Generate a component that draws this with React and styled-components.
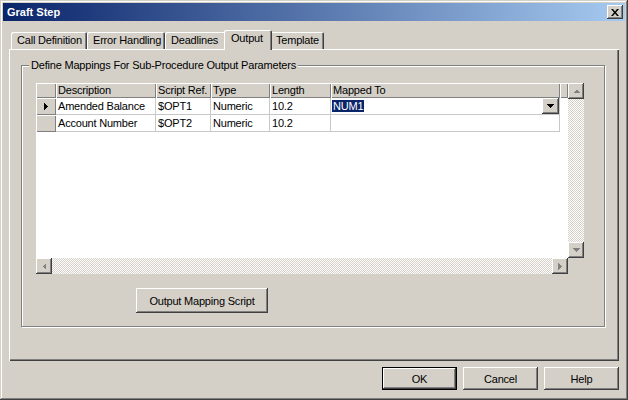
import React from "react";
import styled, { createGlobalStyle, css } from "styled-components";

const GlobalStyle = createGlobalStyle`
  html, body {
    margin: 0;
    padding: 0;
    background: #d4d0c8;
  }
  body {
    font-family: "Liberation Sans", Arial, sans-serif;
    font-size: 11px;
    letter-spacing: -0.2px;
    color: #000;
  }
`;

// classic 3d edges
const raised = css`
  box-shadow: inset -1px -1px #404040, inset 1px 1px #fff,
    inset -2px -2px #808080, inset 2px 2px #d4d0c8;
`;

const Window = styled.div`
  width: 628px;
  height: 400px;
  box-sizing: border-box;
  padding: 3px;
  background: #d4d0c8;
  display: flex;
  flex-direction: column;
  box-shadow: inset -1px -1px #404040, inset 1px 1px #d4d0c8,
    inset -2px -2px #808080, inset 2px 2px #fff;
`;

const TitleBar = styled.div`
  height: 18px;
  display: flex;
  align-items: center;
  justify-content: space-between;
  padding: 0 2px 0 2px;
  background: linear-gradient(to right, #0a246a, #a6caf0);
  color: #fff;
  font-weight: bold;
  font-size: 11px;
  letter-spacing: 0;
`;

const CloseButton = styled.div`
  width: 16px;
  height: 14px;
  background: #d4d0c8;
  display: flex;
  align-items: center;
  justify-content: center;
  ${raised};
`;

const Body = styled.div`
  flex: 1;
  display: flex;
  flex-direction: column;
  padding: 0 6px;
`;

const TabRow = styled.div`
  display: flex;
  align-items: flex-end;
  height: 19px;
  margin-top: 9px;
  padding-left: 2px;
  position: relative;
  z-index: 1;
`;

const Tab = styled.div`
  box-sizing: border-box;
  width: ${(p) => p.w}px;
  height: ${(p) => (p.active ? 20 : 17)}px;
  margin: 0 ${(p) => (p.active ? -2 : 0)}px ${(p) => (p.active ? -1 : 0)}px;
  padding-left: ${(p) => (p.active ? 7 : 6)}px;
  line-height: 17px;
  background: #d4d0c8;
  border-radius: 2px 2px 0 0;
  white-space: nowrap;
  position: relative;
  z-index: ${(p) => (p.active ? 2 : 1)};
  box-shadow: inset 1px 1px #fff, inset -1px 0 #404040, inset -2px 0 #808080;
`;

const Panel = styled.div`
  height: 312px;
  box-sizing: border-box;
  padding: 16px 14px 0 12px;
  box-shadow: inset 1px 1px #fff, inset -1px -1px #404040,
    inset -2px -2px #808080;
`;

const GroupBox = styled.div`
  position: relative;
  height: 262px;
  box-sizing: border-box;
  padding: 17px 19px 0 14px;
  border: 1px solid #808080;
  box-shadow: inset 1px 1px #fff, 1px 1px #fff;
`;

const GroupLabel = styled.span`
  position: absolute;
  top: -7px;
  left: 7px;
  padding: 0 2px;
  background: #d4d0c8;
  line-height: 13px;
`;

const GridFrame = styled.div`
  display: grid;
  grid-template-columns: 532px 16px;
  grid-template-rows: 175px 16px;
`;

const DataArea = styled.div`
  background: #fff;
  overflow: hidden;
`;

const HeaderRow = styled.div`
  display: grid;
  grid-template-columns: 20px 100px 55px 59px 61px 229px 8px;
  height: 15px;
`;

const HeaderCell = styled.div`
  background: #d4d0c8;
  padding-left: 2px;
  line-height: 15px;
  white-space: nowrap;
  overflow: hidden;
  box-shadow: inset 1px 1px #fff, inset -1px -1px #808080;
`;

const Row = styled.div`
  display: grid;
  grid-template-columns: 20px 100px 55px 59px 61px 229px;
  height: 17px;
`;

const Cell = styled.div`
  display: flex;
  align-items: center;
  justify-content: space-between;
  padding-left: 2px;
  border-right: 1px solid #c8c8c8;
  border-bottom: 1px solid #c8c8c8;
  white-space: nowrap;
  overflow: hidden;
`;

const Indicator = styled.div`
  display: flex;
  align-items: center;
  justify-content: center;
  background: #d4d0c8;
  box-shadow: inset 1px 1px #fff, inset -1px -1px #808080;
`;

const Selected = styled.span`
  background: #0a246a;
  color: #fff;
  padding: 0 1px;
  line-height: 12px;
  margin-left: -1px;
`;

const DropButton = styled.div`
  width: 17px;
  height: 16px;
  background: #d4d0c8;
  display: flex;
  align-items: center;
  justify-content: center;
  ${raised};
`;

const ScrollTrack = styled.div`
  display: flex;
  flex-direction: ${(p) => (p.vertical ? "column" : "row")};
  justify-content: space-between;
  background: repeating-conic-gradient(#d4d0c8 0 25%, #fff 0 50%) 0 0 / 2px
    2px;
`;

const ScrollButton = styled.div`
  width: 16px;
  height: 16px;
  background: #d4d0c8;
  display: flex;
  align-items: center;
  justify-content: center;
  ${raised};
`;

const Corner = styled.div`
  background: #d4d0c8;
`;

const Button = styled.div`
  box-sizing: border-box;
  width: ${(p) => p.w}px;
  height: ${(p) => p.h}px;
  display: flex;
  align-items: center;
  justify-content: center;
  background: #d4d0c8;
  ${(p) =>
    p.isDefault
      ? css`
          box-shadow: inset 0 0 0 1px #000, inset -2px -2px #404040,
            inset 2px 2px #fff, inset -3px -3px #808080;
        `
      : raised};
`;

const ScriptButtonRow = styled.div`
  margin: 14px 0 0 100px;
`;

const Footer = styled.div`
  display: flex;
  justify-content: flex-end;
  gap: 6px;
  margin-top: 6px;
`;

const Arrow = ({ dir, color = "#808080" }) => {
  const paths = {
    up: "M0 4 L3.5 0.5 L7 4 Z",
    down: "M0 0 L7 0 L3.5 4 Z",
    left: "M4 0 L4 7 L0.5 3.5 Z",
    right: "M0 0 L3.5 3.5 L0 7 Z",
  };
  const vertical = dir === "up" || dir === "down";
  return (
    <svg
      width={vertical ? 7 : 4}
      height={vertical ? 4 : 7}
      viewBox={vertical ? "0 0 7 4" : "0 0 4 7"}
    >
      <path d={paths[dir]} fill={color} shapeRendering="crispEdges" />
    </svg>
  );
};

const rows = [
  { desc: "Amended Balance", ref: "$OPT1", type: "Numeric", len: "10.2", current: true },
  { desc: "Account Number", ref: "$OPT2", type: "Numeric", len: "10.2" },
];

const tabs = [
  { label: "Call Definition", w: 76 },
  { label: "Error Handling", w: 78 },
  { label: "Deadlines", w: 61 },
  { label: "Output", w: 48, active: true },
  { label: "Template", w: 54 },
];

export default function App() {
  return (
    <>
      <GlobalStyle />
      <Window>
        <TitleBar>
          <span style={{ paddingLeft: 2 }}>Graft Step</span>
          <CloseButton>
            <svg width="8" height="7" viewBox="0 0 8 7">
              <path
                d="M0 0h2l2 2.4L6 0h2L5 3.5 8 7H6L4 4.6 2 7H0l3-3.5z"
                fill="#000"
              />
            </svg>
          </CloseButton>
        </TitleBar>
        <Body>
          <TabRow>
            {tabs.map((t) => (
              <Tab key={t.label} w={t.w} active={t.active}>
                {t.label}
              </Tab>
            ))}
          </TabRow>
          <Panel>
            <GroupBox>
              <GroupLabel>
                Define Mappings For Sub-Procedure Output Parameters
              </GroupLabel>
              <GridFrame>
                <DataArea>
                  <HeaderRow>
                    <HeaderCell />
                    <HeaderCell>Description</HeaderCell>
                    <HeaderCell>Script Ref.</HeaderCell>
                    <HeaderCell>Type</HeaderCell>
                    <HeaderCell>Length</HeaderCell>
                    <HeaderCell>Mapped To</HeaderCell>
                    <HeaderCell />
                  </HeaderRow>
                  {rows.map((r) => (
                    <Row key={r.ref}>
                      <Indicator>
                        {r.current && <Arrow dir="right" color="#000" />}
                      </Indicator>
                      <Cell>{r.desc}</Cell>
                      <Cell>{r.ref}</Cell>
                      <Cell>{r.type}</Cell>
                      <Cell>{r.len}</Cell>
                      <Cell>
                        {r.current && (
                          <>
                            <Selected>NUM1</Selected>
                            <DropButton>
                              <Arrow dir="down" color="#000" />
                            </DropButton>
                          </>
                        )}
                      </Cell>
                    </Row>
                  ))}
                </DataArea>
                <ScrollTrack vertical>
                  <ScrollButton>
                    <Arrow dir="up" />
                  </ScrollButton>
                  <ScrollButton>
                    <Arrow dir="down" />
                  </ScrollButton>
                </ScrollTrack>
                <ScrollTrack>
                  <ScrollButton>
                    <Arrow dir="left" />
                  </ScrollButton>
                  <ScrollButton>
                    <Arrow dir="right" />
                  </ScrollButton>
                </ScrollTrack>
                <Corner />
              </GridFrame>
              <ScriptButtonRow>
                <Button w={132} h={25}>
                  Output Mapping Script
                </Button>
              </ScriptButtonRow>
            </GroupBox>
          </Panel>
          <Footer>
            <Button w={75} h={23} isDefault>
              OK
            </Button>
            <Button w={75} h={23}>
              Cancel
            </Button>
            <Button w={75} h={23}>
              Help
            </Button>
          </Footer>
        </Body>
      </Window>
    </>
  );
}
